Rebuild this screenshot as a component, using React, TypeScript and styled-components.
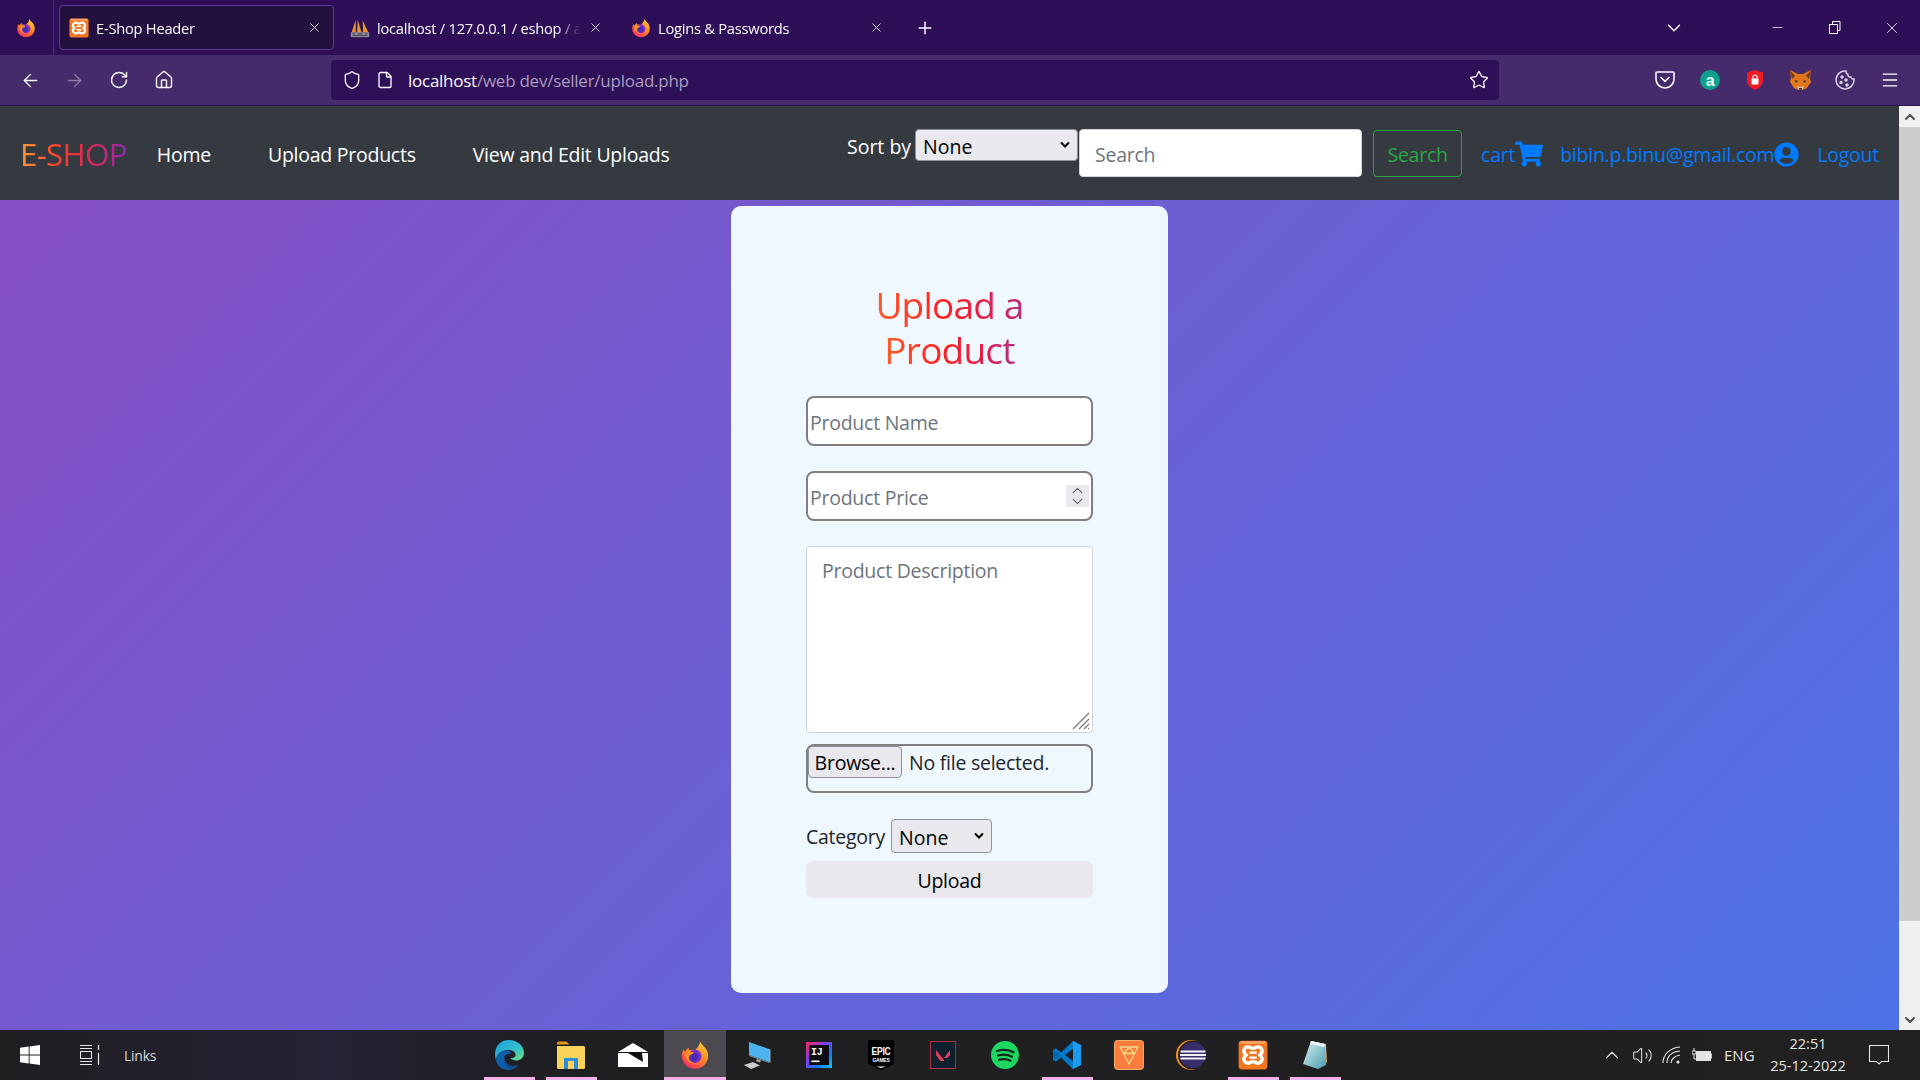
import React, { FC } from 'react';
import styled, { createGlobalStyle } from 'styled-components';
import { ArrowLeft, ArrowRight, RotateCw, House, Shield, File, Star, Menu, ChevronDown, ChevronUp, Minus, X, Plus, Volume2 } from 'lucide-react';
import { FaShoppingCart, FaUserCircle } from 'react-icons/fa';

const UI_FONT = `"Open Sans", "Noto Sans", sans-serif`;

const GlobalStyle = createGlobalStyle`
    html, body {
        margin: 0;
        padding: 0;
        overflow: hidden;
    }
    * {
        box-sizing: border-box;
    }
`;

const Screen = styled.div`
    width: 1920px;
    height: 1080px;
    display: flex;
    flex-direction: column;
    font-family: ${UI_FONT};
    letter-spacing: -0.25px;
`;

/* browser chrome */
const TabBar = styled.div`
    height: 55px;
    background: #2e0f57;
    display: flex;
    align-items: center;
    color: #fbfbfe;
`;
const FoxCell = styled.div`
    width: 54px;
    height: 55px;
    border-right: 1px solid #4a3270;
    margin-right: 5px;
    padding-right: 2px;
    display: flex;
    align-items: center;
    justify-content: center;
`;
const Tab = styled.div<{ $active?: boolean }>`
    width: 275px;
    height: 45px;
    margin-right: 6px;
    padding: 0 11px 0 9px;
    display: flex;
    align-items: center;
    gap: 7px;
    font-size: 14.7px;
    border-radius: 4px;
    border: 1px solid ${(p) => (p.$active ? '#5b3a96' : 'transparent')};
    background: ${(p) => (p.$active ? '#23103e' : 'transparent')};
`;
const TabTitle = styled.span`
    flex: 1;
    white-space: nowrap;
    overflow: hidden;
    mask-image: linear-gradient(to right, #000 88%, transparent 100%);
`;
const WindowButtons = styled.div`
    margin-left: auto;
    display: flex;
    align-items: center;
    color: #fbfbfe;
`;
const TabListButton = styled.div`
    width: 56px;
    margin-right: 47px;
    display: flex;
    justify-content: center;
`;
const WindowButton = styled.div`
    width: 57px;
    display: flex;
    justify-content: center;
`;
const NewTab = styled.div`
    margin-left: 13px;
    display: flex;
`;
const Toolbar = styled.div`
    height: 51px;
    background: #452b6b;
    border-bottom: 1px solid #2a0f50;
    display: flex;
    align-items: center;
    color: #fbfbfe;
    padding-left: 8px;
`;
const NavIcon = styled.div<{ $dim?: boolean }>`
    width: 44.6px;
    display: flex;
    justify-content: center;
    opacity: ${(p) => (p.$dim ? 0.4 : 1)};
`;
const UrlBar = styled.div`
    width: 1168px;
    height: 40px;
    margin-left: 144.6px;
    border-radius: 4px;
    background: #2e1058;
    display: flex;
    align-items: center;
    padding: 0 10px 0 11px;
    font-size: 17px;
`;
const UrlHost = styled.span`
    color: #fbfbfe;
`;
const UrlPath = styled.span`
    color: #a99cbf;
`;
const UrlText = styled.div`
    flex: 1;
    margin-left: 14px;
    white-space: nowrap;
`;
const ShieldBox = styled.div`
    display: flex;
    margin-right: 14px;
`;
const Extensions = styled.div`
    margin-left: 144px;
    display: flex;
    align-items: center;
`;
const ExtIcon = styled.div`
    width: 45px;
    display: flex;
    justify-content: center;
`;

/* page area */
const Viewport = styled.div`
    height: 924px;
    display: flex;
`;
const Page = styled.div`
    flex: 1;
    display: flex;
    flex-direction: column;
    background: #343a40;
`;
const Scrollbar = styled.div`
    width: 21px;
    background: #f0f0f0;
    display: flex;
    flex-direction: column;
    justify-content: space-between;
`;
const ScrollThumb = styled.div`
    height: 794px;
    background: #cdcdcd;
`;
const ScrollArrow = styled.div`
    height: 21px;
    display: flex;
    align-items: center;
    justify-content: center;
    color: #505050;
    background: #f0f0f0;
`;
const ScrollTop = styled.div`
    display: flex;
    flex-direction: column;
`;
const Navbar = styled.nav`
    height: 94px;
    flex-shrink: 0;
    background: #343a40;
    display: flex;
    align-items: center;
    padding: 0 20px 0 20px;
    font-size: 19.5px;
`;
const Brand = styled.span`
    font-size: 31.5px;
    font-weight: 400;
    letter-spacing: -0.8px;
    margin-right: 30px;
    background: linear-gradient(to right, #ff9a3c, #ff3f2b 35%, #d9285c 68%, #8d2bb0);
    -webkit-background-clip: text;
    background-clip: text;
    color: transparent;
`;
const NavLinks = styled.div`
    display: flex;
    gap: 57px;
`;
const NavLink = styled.a`
    color: #fff;
    text-decoration: none;
    padding-top: 2px;
`;
const RightGroup = styled.div`
    margin-left: auto;
    display: flex;
    align-items: center;
`;
const SortGroup = styled.div`
    display: flex;
    align-items: center;
    gap: 4px;
    margin-bottom: 16px;
    color: #fff;
`;
const SortLabel = styled.span`
    padding-top: 2px;
    letter-spacing: 0;
`;
const SelectWrap = styled.div`
    position: relative;
    display: flex;
`;
const SelectChevron = styled.svg`
    position: absolute;
    right: 7px;
    top: 50%;
    margin-top: -4px;
    pointer-events: none;
`;
const NativeSelect = styled.select<{ $w: number; $h: number }>`
    width: ${(p) => p.$w}px;
    height: ${(p) => p.$h}px;
    appearance: none;
    background: #e9e8ed;
    border: 1px solid #8f8f9d;
    border-radius: 4px;
    padding: 2px 0 0 7px;
    font-family: ${UI_FONT};
    font-size: 19.5px;
    color: #000;
`;
const SearchInput = styled.input`
    width: 283px;
    height: 48px;
    margin-left: 1px;
    padding: 2px 15px 0;
    border: 1px solid #ced4da;
    border-radius: 4px;
    font-family: ${UI_FONT};
    font-size: 19.5px;
    letter-spacing: -0.25px;
    &::placeholder {
        color: #6c757d;
        opacity: 1;
    }
`;
const SearchButton = styled.button`
    width: 89px;
    height: 47px;
    margin-left: 11px;
    background: transparent;
    border: 1px solid #28a745;
    border-radius: 4px;
    color: #28a745;
    font-family: ${UI_FONT};
    font-size: 19.5px;
    letter-spacing: -0.25px;
    padding: 2px 0 0;
`;
const UserLink = styled.a<{ $left: number }>`
    display: flex;
    align-items: center;
    color: #007bff;
    text-decoration: none;
    margin-left: ${(p) => p.$left}px;
    padding-top: 2px;
`;
const Main = styled.main`
    flex: 1;
    background: linear-gradient(135deg, #874fc5, #4c72e5);
    display: flex;
    justify-content: center;
    align-items: flex-start;
    padding-top: 6px;
`;
const Card = styled.div`
    width: 437px;
    height: 787px;
    background: #f0f8ff;
    border-radius: 10px;
    padding: 76px 75px 0;
    display: flex;
    flex-direction: column;
    align-items: center;
`;
const Title = styled.h1`
    margin: 0 0 24px;
    display: flex;
    flex-direction: column;
    align-items: center;
    font-size: 37px;
    font-weight: 400;
    line-height: 45px;
    letter-spacing: -0.8px;
`;
const TitleLine = styled.span`
    background: linear-gradient(to right, #ff5e2b, #ff1f1f 45%, #e0204a 75%, #b72d85);
    -webkit-background-clip: text;
    background-clip: text;
    color: transparent;
`;
const Field = styled.div`
    position: relative;
    width: 287px;
    display: flex;
`;
const TextInput = styled.input`
    width: 287px;
    height: 50px;
    margin-bottom: 25px;
    padding: 2px 2px 0;
    border: 2px solid #808080;
    border-radius: 8px;
    background: #fff;
    font-family: ${UI_FONT};
    font-size: 19.5px;
    letter-spacing: -0.25px;
    &::placeholder {
        color: #6c757d;
        opacity: 1;
    }
`;
const Stepper = styled.div`
    position: absolute;
    right: 4px;
    top: 14px;
    width: 23px;
    height: 22px;
    background: #e9e8ed;
    display: flex;
    flex-direction: column;
    align-items: center;
    justify-content: center;
    color: #66666e;
    svg {
        margin: -3px 0;
    }
`;
const Description = styled.textarea`
    width: 287px;
    height: 187px;
    margin-bottom: 11px;
    padding: 10px 15px;
    border: 1px solid #ced4da;
    border-radius: 4px;
    background: #fff;
    resize: none;
    font-family: ${UI_FONT};
    font-size: 19.5px;
    letter-spacing: -0.25px;
    &::placeholder {
        color: #6c757d;
        opacity: 1;
    }
`;
const Grip = styled.svg`
    position: absolute;
    right: 3px;
    bottom: 14px;
`;
const FileBox = styled.div`
    width: 287px;
    height: 49px;
    margin-bottom: 26px;
    border: 2px solid #808080;
    border-radius: 8px;
    color: #212529;
    font-size: 19.5px;
    display: flex;
    align-items: flex-start;
    gap: 7px;
`;
const FileName = styled.span`
    padding-top: 3px;
`;
const BrowseButton = styled.button`
    width: 94px;
    height: 32px;
    padding: 0;
    background: #e9e8ed;
    border: 1px solid #8f8f9d;
    border-radius: 4px;
    font-family: ${UI_FONT};
    font-size: 19.5px;
    letter-spacing: -0.25px;
    color: #000;
`;
const CategoryRow = styled.div`
    width: 287px;
    height: 34px;
    margin-bottom: 8px;
    display: flex;
    align-items: center;
    gap: 6px;
    color: #212529;
    font-size: 19.5px;
`;
const UploadButton = styled.button`
    width: 287px;
    height: 37px;
    padding: 2px 0 0;
    border: 0;
    border-radius: 6px;
    background: #e9e8ed;
    font-family: ${UI_FONT};
    font-size: 19.5px;
    letter-spacing: -0.25px;
    color: #000;
`;

/* windows taskbar */
const Taskbar = styled.div`
    height: 50px;
    display: flex;
    align-items: center;
    color: #e8e8e8;
    background: linear-gradient(90deg, #201d21 0, #232335 17%, #1f1e21 30%, #212121 100%);
`;
const Start = styled.div`
    width: 60px;
    display: flex;
    justify-content: center;
`;
const TaskView = styled.div`
    width: 60px;
    padding-left: 20px;
    display: flex;
`;
const Links = styled.div`
    width: 358px;
    padding-left: 4px;
    font-size: 14px;
    color: #d8d8d8;
`;
const TaskIcons = styled.div`
    display: flex;
    height: 50px;
`;
const TaskIcon = styled.div<{ $selected?: boolean; $open?: boolean }>`
    position: relative;
    width: 62px;
    display: flex;
    align-items: center;
    justify-content: center;
    background: ${(p) => (p.$selected ? '#4c4a50' : 'transparent')};
    &::after {
        content: '';
        display: ${(p) => (p.$open ? 'block' : 'none')};
        position: absolute;
        left: ${(p) => (p.$selected ? 0 : '6px')};
        right: ${(p) => (p.$selected ? 0 : '5px')};
        bottom: 0;
        height: 3px;
        background: #f5b0e8;
    }
`;
const Tray = styled.div`
    margin-left: auto;
    height: 50px;
    display: flex;
    align-items: center;
    color: #e4e4e4;
`;
const TrayIcon = styled.div`
    width: 30px;
    display: flex;
    justify-content: center;
`;
const Lang = styled.div`
    width: 40px;
    margin-left: 7px;
    font-size: 15px;
    letter-spacing: 0;
`;
const Clock = styled.div`
    width: 80px;
    margin-left: 4px;
    text-align: center;
    font-size: 14.5px;
    letter-spacing: 0;
    line-height: 22px;
`;
const Notify = styled.div`
    width: 72px;
    padding-left: 21px;
    display: flex;
`;

const Firefox: FC<{ size?: number }> = ({ size = 20 }) => (
    <svg width={size} height={size} viewBox="0 0 24 24">
        <defs>
            <linearGradient id="ffBody" x1="0.8" y1="0" x2="0.2" y2="1">
                <stop offset="0" stopColor="#ffd23c" />
                <stop offset="0.45" stopColor="#ff8a1f" />
                <stop offset="1" stopColor="#f5256a" />
            </linearGradient>
        </defs>
        <path d="M16 1c.6 2 2 2.6 3.2 4.2 2 2 3.3 4.6 3.3 7.3C22.5 18.3 17.8 23 12 23S1.500 18.3 1.500 12.500c0-2 .5-3.800 1.500-5.400.2 1 .7 1.700 1.300 2.200.5-1.500 1.500-2.700 3-3.300-.4 1-.4 1.700 0 2.200 1.500-.7 3-.5 4.700.3.9-2 4-3.500 4-7.500z" fill="url(#ffBody)" />
        <circle cx="11.8" cy="13" r="5.4" fill="#7b2fc9" />
        <circle cx="11.4" cy="13.6" r="3.4" fill="#4a2bb0" />
        <path d="M4 10c1.500-1 4-1.500 6-.5 1.500.8 1 1.500 0 1.700-1.700.3-3 1.300-3 3 0 2.300 2.200 4.300 5 4.300-4 1.200-8-2-8-8.500z" fill="#ff9320" />
    </svg>
);

const Xampp: FC<{ size?: number }> = ({ size = 20 }) => (
    <svg width={size} height={size} viewBox="0 0 24 24">
        <rect x="0.5" y="0.5" width="23" height="23" rx="2.5" fill="#f0761f" />
        <rect x="2" y="1" width="20" height="2" fill="#f9a566" />
        <path d="M8 5.500a3.300 3.300 0 0 0-2.600 5.300L6.500 12l-1.100 1.200A3.300 3.300 0 0 0 8 18.500c1.600 0 2.400-1.200 4-1.200s2.400 1.200 4 1.200a3.300 3.300 0 0 0 2.600-5.300L17.500 12l1.100-1.200A3.300 3.300 0 0 0 16 5.500c-1.600 0-2.400 1.200-4 1.200S9.600 5.500 8 5.500z" fill="none" stroke="#fff" strokeWidth="2.7" />
        <path d="M9 10h6M9 14h6" stroke="#fff" strokeWidth="1.8" />
    </svg>
);

const PmaLogo = () => (
    <svg width="20" height="20" viewBox="0 0 24 24">
        <path d="M7 2 2 17h5zM9 2v15h5zM15 3l1 14h6z" fill="#e8901c" />
        <path d="M10 2l-1 15h1zM17 5l-1 12h1z" fill="#f4c04c" />
        <rect x="1" y="17" width="22" height="6" fill="#8d8d99" />
        <path d="M3 19h3M9 19h6M18 19h3M3 21h18" stroke="#3a3a46" strokeWidth="1" />
    </svg>
);

const PocketIcon = () => (
    <svg width="20" height="20" viewBox="0 0 20 20" fill="none" stroke="#fbfbfe" strokeWidth="1.6">
        <path d="M2 2h16a1 1 0 0 1 1 1v6a9 9 0 0 1-18 0V3a1 1 0 0 1 1-1z" />
        <path d="M6 7.500l4 3.800 4-3.800" strokeLinecap="round" />
    </svg>
);

const AssistantIcon = () => (
    <svg width="20" height="20" viewBox="0 0 20 20">
        <circle cx="10" cy="10" r="10" fill="#0ea08f" />
        <text x="10" y="15.5" textAnchor="middle" fontFamily="Liberation Sans" fontWeight="700" fontSize="16" fill="#eafff8">a</text>
    </svg>
);

const LockShield = () => (
    <svg width="20" height="20" viewBox="0 0 20 20">
        <path d="M10 0l8 2.500V10c0 5-4 8.500-8 10-4-1.500-8-5-8-10V2.500z" fill="#ee1c25" />
        <rect x="6.5" y="8.5" width="7" height="6" rx="0.8" fill="#fff" />
        <path d="M8 8.500V7a2 2 0 0 1 4 0v1.500" fill="none" stroke="#fff" strokeWidth="1.2" />
    </svg>
);

const FoxMask = () => (
    <svg width="21" height="20" viewBox="0 0 21 20">
        <path d="M0 0l8 4h5l8-4-1 8 1 4-4 6-4 2h-5l-4-2-4-6 1-4z" fill="#e2761b" />
        <path d="M0 0l5 6-3 3zM21 0l-5 6 3 3z" fill="#763d16" />
        <path d="M7 16l3.500 1 3.500-1-1 3H8z" fill="#d7c1b3" />
        <path d="M5 10l3 1-2 2zM16 10l-3 1 2 2z" fill="#233447" />
        <path d="M9 18h3v1.500H9z" fill="#161616" />
    </svg>
);

const CookieIcon = () => (
    <svg width="20" height="20" viewBox="0 0 20 20" fill="none" stroke="#d7cfe4" strokeWidth="1.5">
        <path d="M11 1a9 9 0 1 0 8 8c-1.500.5-3-.5-3-2-1.800.2-3.500-1-3.200-3C11.500 4 10.800 2.500 11 1z" />
        <circle cx="7" cy="7" r="1" fill="#d7cfe4" />
        <circle cx="6" cy="12.5" r="1" fill="#d7cfe4" />
        <circle cx="11" cy="10" r="1" fill="#d7cfe4" />
        <circle cx="12" cy="15" r="1" fill="#d7cfe4" />
    </svg>
);

const WinLogo = () => (
    <svg width="20" height="20" viewBox="0 0 20 20" fill="#fff">
        <path d="M0 2.800l8.700-1.200v8H0zM9.600 1.400L20 0v9.600H9.600zM0 10.500h8.700v8L0 17.300zM9.600 10.500H20V20L9.600 18.600z" />
    </svg>
);

const TaskViewIcon = () => (
    <svg width="20" height="20" viewBox="0 0 20 20" fill="none" stroke="#e8e8e8" strokeWidth="1">
        <path d="M0 .5h12M0 3.500h12M0 16.500h12M0 19.500h12" />
        <rect x="0.5" y="6.5" width="11" height="7" />
        <path d="M18.500 0v5M18.500 8v12" strokeWidth="1.2" />
    </svg>
);

const EdgeIcon = () => (
    <svg width="30" height="30" viewBox="0 0 30 30">
        <defs>
            <linearGradient id="edgeTop" x1="0" y1="0" x2="1" y2="1">
                <stop offset="0" stopColor="#1a9ee0" />
                <stop offset="0.6" stopColor="#35c1c8" />
                <stop offset="1" stopColor="#6ee07a" />
            </linearGradient>
        </defs>
        <path d="M15 0c8 0 15 5.500 15 13 0 5-4 7.500-8 7.500-2.500 0-5-1-5.500-2.500 4 .5 5.500-2 5-4-1-3-4.500-4.500-8-4C7 10.500 3 14 2 20-1.500 9 5 0 15 0z" fill="url(#edgeTop)" />
        <path d="M2 20c0-6 4.500-9.500 9.500-9.500 3.500 0 6 1.500 6 3.500-5-1-8 2-7 6 1 3.500 5 6 9 6 2 0 4-1 5-1.500-2.500 3.500-6 5.500-10 5.500C8 30 3 26 2 20z" fill="#0c5fa8" />
        <path d="M11 20c.7 3 4 6 8.500 6 2 0 4-1 5-1.500C23 27 21 28.500 18 29.500 13 29 9.500 25 11 20z" fill="#0f4c8a" />
    </svg>
);

const FolderIcon = () => (
    <svg width="28" height="30" viewBox="0 0 28 30">
        <path d="M0 3a1.500 1.500 0 0 1 1.500-1.500h8l3 3H0z" fill="#e09a14" />
        <path d="M0 6h26.500A1.500 1.500 0 0 1 28 7.500v20a1.500 1.500 0 0 1-1.500 1.500h-25A1.500 1.500 0 0 1 0 27.500z" fill="#fbd25a" />
        <path d="M7 24v-6h14v6h-4v-3h-6v3zM7 24h4v5H7zM17 24h4v5h-4z" fill="#2a8fdb" />
    </svg>
);

const MailIcon = () => (
    <svg width="30" height="24" viewBox="0 0 30 24">
        <path d="M15 0l15 9H0z" fill="#fff" />
        <path d="M0 10h30v14H0z" fill="#fff" />
        <path d="M0 9h30v1H0zM10 10h14l1 9z" fill="#111" />
    </svg>
);

const PcIcon = () => (
    <svg width="28" height="28" viewBox="0 0 28 28">
        <path d="M6 1l20 7v13L6 14z" fill="#4db2ee" />
        <path d="M26 8l1.500 .5v13.500L26 21z" fill="#9aa4ad" />
        <path d="M6 14l20 7v1L6 15z" fill="#7d8b96" />
        <path d="M14 18l4 1.500-1 2-4-1.500z" fill="#aaa" />
        <path d="M1 24l9-3 7 3.500-9 3.500z" fill="#c9ccd0" />
    </svg>
);

const IdeaIcon = () => (
    <svg width="26" height="30" viewBox="0 0 26 30">
        <defs>
            <linearGradient id="ideaBorder" x1="0" y1="0" x2="1" y2="1">
                <stop offset="0" stopColor="#fe2857" />
                <stop offset="0.4" stopColor="#7b40f0" />
                <stop offset="0.7" stopColor="#087cfa" />
                <stop offset="1" stopColor="#19c5f0" />
            </linearGradient>
        </defs>
        <rect x="0" y="2" width="26" height="26" fill="url(#ideaBorder)" />
        <rect x="3" y="5" width="20" height="20" fill="#0d0d12" />
        <text x="5" y="15" fontFamily="Liberation Mono" fontWeight="700" fontSize="10" fill="#fff">IJ</text>
        <rect x="5.5" y="20.5" width="8" height="1.6" fill="#fff" />
    </svg>
);

const EpicIcon = () => (
    <svg width="26" height="30" viewBox="0 0 26 30">
        <path d="M1.500 0h23A1.500 1.500 0 0 1 26 1.500V24l-13 6-13-6V1.500A1.500 1.500 0 0 1 1.500 0z" fill="#000" />
        <text x="13" y="15" textAnchor="middle" fontFamily="Liberation Sans" fontWeight="700" fontSize="11.5" fill="#fff" textLength="19" lengthAdjust="spacingAndGlyphs">EPIC</text>
        <text x="13" y="22" textAnchor="middle" fontFamily="Liberation Sans" fontWeight="700" fontSize="5" fill="#fff" textLength="17" lengthAdjust="spacingAndGlyphs">GAMES</text>
        <path d="M8 26.500h10L13 28z" fill="#fff" />
    </svg>
);

const ValorantIcon = () => (
    <svg width="26" height="28" viewBox="0 0 26 28">
        <rect x="0.5" y="0.5" width="25" height="27" fill="#10202e" stroke="#a8303f" />
        <path d="M6 9l8 10v1h-3.500L6 14z" fill="#e0405a" />
        <path d="M20 9v5l-2.500 3h-3.500z" fill="#e0405a" />
    </svg>
);

const SpotifyIcon = () => (
    <svg width="28" height="28" viewBox="0 0 28 28">
        <circle cx="14" cy="14" r="14" fill="#1ed760" />
        <path d="M6 10c5.500-1.700 11.500-1.200 16.500 1.300M7 14.500c4.700-1.300 10-.9 14 1.200M8 18.700c4-1 8-.7 11.500 1" fill="none" stroke="#14291c" strokeWidth="2.2" strokeLinecap="round" />
    </svg>
);

const CodeIcon = () => (
    <svg width="30" height="30" viewBox="0 0 30 30">
        <path d="M21 1l8 4v20l-8 4-12-11.500-5 4-3-1.500v-10l3-1.500 5 4z" fill="#007acc" />
        <path d="M21 1l8 4v20l-8 4z" fill="#1f9cf0" />
        <path d="M21 9l-8 6 8 6z" fill="#1e1e20" />
        <path d="M4 11l-3 2.500v3L4 19l4-4z" fill="#0065a9" />
    </svg>
);

const TriangleIcon = () => (
    <svg width="30" height="30" viewBox="0 0 30 30" fill="none">
        <rect x="0.5" y="0.5" width="29" height="29" rx="3" fill="#fb7c3c" stroke="#f4b36b" />
        <path d="M6 7h18l-9 17zM10 13.500h10M15 7l-5 6.500M15 7l5 6.500" stroke="#ffd98a" strokeWidth="1.3" />
    </svg>
);

const EclipseIcon = () => (
    <svg width="30" height="30" viewBox="0 0 30 30">
        <circle cx="15" cy="15" r="15" fill="#f7941e" />
        <circle cx="16.5" cy="15" r="14.5" fill="#202020" />
        <circle cx="17" cy="15" r="13" fill="#3a2d6c" />
        <path d="M4.500 11.500h25M4 15h26M4.500 18.500h25" stroke="#f4f2fa" strokeWidth="1.8" />
    </svg>
);

const NotepadIcon = () => (
    <svg width="26" height="30" viewBox="0 0 26 30">
        <defs>
            <linearGradient id="padFill" x1="0" y1="0" x2="1" y2="1">
                <stop offset="0" stopColor="#d8eff2" />
                <stop offset="1" stopColor="#4a9eb0" />
            </linearGradient>
        </defs>
        <path d="M9 1l15 3 1 18-3 2z" fill="#e8a25a" />
        <path d="M9 1l14 3 1 21-8 4-15-5z" fill="url(#padFill)" />
        <path d="M9 1l14 3-.5 3L8 4z" fill="#eef4f4" />
    </svg>
);

const WifiIcon = () => (
    <svg width="20" height="18" viewBox="0 0 20 18" fill="none" stroke="#e4e4e4" strokeWidth="1.1">
        <path d="M1 17C1 9 7 2 18 1M5 17c0-6 4-11 13-12M9 17c0-3 3-7 9-8" />
        <circle cx="16" cy="16" r="1.6" fill="#e4e4e4" stroke="none" />
    </svg>
);

const BatteryIcon = () => (
    <svg width="20" height="14" viewBox="0 0 20 14">
        <rect x="4.5" y="3.5" width="14" height="9" fill="none" stroke="#e4e4e4" />
        <rect x="5" y="4" width="13" height="8" fill="#e4e4e4" />
        <path d="M19 6h1v4h-1zM2 0v3M0 3h4v3H0zM2 6v5h3" fill="none" stroke="#e4e4e4" />
    </svg>
);

const NotifyIcon = () => (
    <svg width="20" height="20" viewBox="0 0 20 20" fill="none" stroke="#e8e8e8" strokeWidth="1.1">
        <path d="M.5.500h19v16h-7l-2.500 2.500-2.500-2.500h-7z" />
    </svg>
);

const SmallChevron = () => (
    <SelectChevron width="12" height="8" viewBox="0 0 12 8" fill="none" stroke="#000" strokeWidth="2">
        <path d="M2 1.500l4 4 4-4" />
    </SelectChevron>
);

const Tabs = [
    { title: 'E-Shop Header', icon: <Xampp />, active: true },
    { title: 'localhost / 127.0.0.1 / eshop / admin', icon: <PmaLogo /> },
    { title: 'Logins & Passwords', icon: <Firefox /> },
];

const TaskApps = [
    { icon: <EdgeIcon />, open: true },
    { icon: <FolderIcon />, open: true },
    { icon: <MailIcon /> },
    { icon: <Firefox size={30} />, open: true, selected: true },
    { icon: <PcIcon /> },
    { icon: <IdeaIcon /> },
    { icon: <EpicIcon /> },
    { icon: <ValorantIcon /> },
    { icon: <SpotifyIcon /> },
    { icon: <CodeIcon />, open: true },
    { icon: <TriangleIcon /> },
    { icon: <EclipseIcon /> },
    { icon: <Xampp size={30} />, open: true },
    { icon: <NotepadIcon />, open: true },
];

const App: FC = () => {
    return (
        <Screen>
            <GlobalStyle />
            <TabBar>
                <FoxCell>
                    <Firefox />
                </FoxCell>
                {Tabs.map((tab) => (
                    <Tab key={tab.title} $active={tab.active}>
                        {tab.icon}
                        <TabTitle>{tab.title}</TabTitle>
                        <X size={15} strokeWidth={1.3} />
                    </Tab>
                ))}
                <NewTab>
                    <Plus size={20} strokeWidth={1.8} />
                </NewTab>
                <WindowButtons>
                    <TabListButton>
                        <ChevronDown size={22} strokeWidth={1.6} />
                    </TabListButton>
                    <WindowButton>
                        <Minus size={15} strokeWidth={1.2} />
                    </WindowButton>
                    <WindowButton>
                        <svg width="12" height="13" viewBox="0 0 12 13" fill="none" stroke="#fbfbfe">
                            <path d="M3.500 3V.5h7.500v9H8.500M.5 3.500h8v9h-8z" />
                        </svg>
                    </WindowButton>
                    <WindowButton>
                        <X size={18} strokeWidth={1.1} />
                    </WindowButton>
                </WindowButtons>
            </TabBar>
            <Toolbar>
                <NavIcon>
                    <ArrowLeft size={21} strokeWidth={1.6} />
                </NavIcon>
                <NavIcon $dim>
                    <ArrowRight size={21} strokeWidth={1.6} />
                </NavIcon>
                <NavIcon>
                    <RotateCw size={20} strokeWidth={1.8} />
                </NavIcon>
                <NavIcon>
                    <House size={20} strokeWidth={1.7} />
                </NavIcon>
                <UrlBar>
                    <ShieldBox>
                        <Shield size={20} strokeWidth={1.6} />
                    </ShieldBox>
                    <File size={18} strokeWidth={1.8} />
                    <UrlText>
                        <UrlHost>localhost</UrlHost>
                        <UrlPath>/web dev/seller/upload.php</UrlPath>
                    </UrlText>
                    <Star size={20} strokeWidth={1.6} />
                </UrlBar>
                <Extensions>
                    <ExtIcon><PocketIcon /></ExtIcon>
                    <ExtIcon><AssistantIcon /></ExtIcon>
                    <ExtIcon><LockShield /></ExtIcon>
                    <ExtIcon><FoxMask /></ExtIcon>
                    <ExtIcon><CookieIcon /></ExtIcon>
                    <ExtIcon><Menu size={20} strokeWidth={1.6} /></ExtIcon>
                </Extensions>
            </Toolbar>
            <Viewport>
                <Page>
                    <Navbar>
                        <Brand>E-SHOP</Brand>
                        <NavLinks>
                            <NavLink href="#">Home</NavLink>
                            <NavLink href="#">Upload Products</NavLink>
                            <NavLink href="#">View and Edit Uploads</NavLink>
                        </NavLinks>
                        <RightGroup>
                            <SortGroup>
                                <SortLabel>Sort by</SortLabel>
                                <SelectWrap>
                                    <NativeSelect $w={163} $h={32} defaultValue="None">
                                        <option>None</option>
                                    </NativeSelect>
                                    <SmallChevron />
                                </SelectWrap>
                            </SortGroup>
                            <SearchInput placeholder="Search" />
                            <SearchButton>Search</SearchButton>
                            <UserLink href="#" $left={19}>
                                cart
                                <FaShoppingCart size={28} />
                            </UserLink>
                            <UserLink href="#" $left={17}>
                                bibin.p.binu@gmail.com
                                <FaUserCircle size={25} />
                            </UserLink>
                            <UserLink href="#" $left={18}>Logout</UserLink>
                        </RightGroup>
                    </Navbar>
                    <Main>
                        <Card>
                            <Title>
                                <TitleLine>Upload a</TitleLine>
                                <TitleLine>Product</TitleLine>
                            </Title>
                            <TextInput placeholder="Product Name" />
                            <Field>
                                <TextInput placeholder="Product Price" />
                                <Stepper>
                                    <ChevronUp size={17} strokeWidth={1.6} />
                                    <ChevronDown size={17} strokeWidth={1.6} />
                                </Stepper>
                            </Field>
                            <Field>
                                <Description placeholder="Product Description" />
                                <Grip width="18" height="18" viewBox="0 0 18 18" stroke="#7a7a7a" strokeWidth="1.2">
                                    <path d="M1 17L17 1M7 17L17 7M12 17l5-5M16 17l1-1" />
                                </Grip>
                            </Field>
                            <FileBox>
                                <BrowseButton>Browse...</BrowseButton>
                                <FileName>No file selected.</FileName>
                            </FileBox>
                            <CategoryRow>
                                <span>Category</span>
                                <SelectWrap>
                                    <NativeSelect $w={101} $h={34} defaultValue="None">
                                        <option>None</option>
                                    </NativeSelect>
                                    <SmallChevron />
                                </SelectWrap>
                            </CategoryRow>
                            <UploadButton>Upload</UploadButton>
                        </Card>
                    </Main>
                </Page>
                <Scrollbar>
                    <ScrollTop>
                        <ScrollArrow><ChevronUp size={16} strokeWidth={3} /></ScrollArrow>
                        <ScrollThumb />
                    </ScrollTop>
                    <ScrollArrow><ChevronDown size={16} strokeWidth={3} /></ScrollArrow>
                </Scrollbar>
            </Viewport>
            <Taskbar>
                <Start><WinLogo /></Start>
                <TaskView><TaskViewIcon /></TaskView>
                <Links>Links</Links>
                <TaskIcons>
                    {TaskApps.map((app, i) => (
                        <TaskIcon key={i} $open={app.open} $selected={app.selected}>
                            {app.icon}
                        </TaskIcon>
                    ))}
                </TaskIcons>
                <Tray>
                    <TrayIcon><ChevronUp size={22} strokeWidth={1.2} /></TrayIcon>
                    <TrayIcon><Volume2 size={21} strokeWidth={1.2} /></TrayIcon>
                    <TrayIcon><WifiIcon /></TrayIcon>
                    <TrayIcon><BatteryIcon /></TrayIcon>
                    <Lang>ENG</Lang>
                    <Clock>
                        22:51
                        <br />
                        25-12-2022
                    </Clock>
                    <Notify><NotifyIcon /></Notify>
                </Tray>
            </Taskbar>
        </Screen>
    );
};

export default App;
